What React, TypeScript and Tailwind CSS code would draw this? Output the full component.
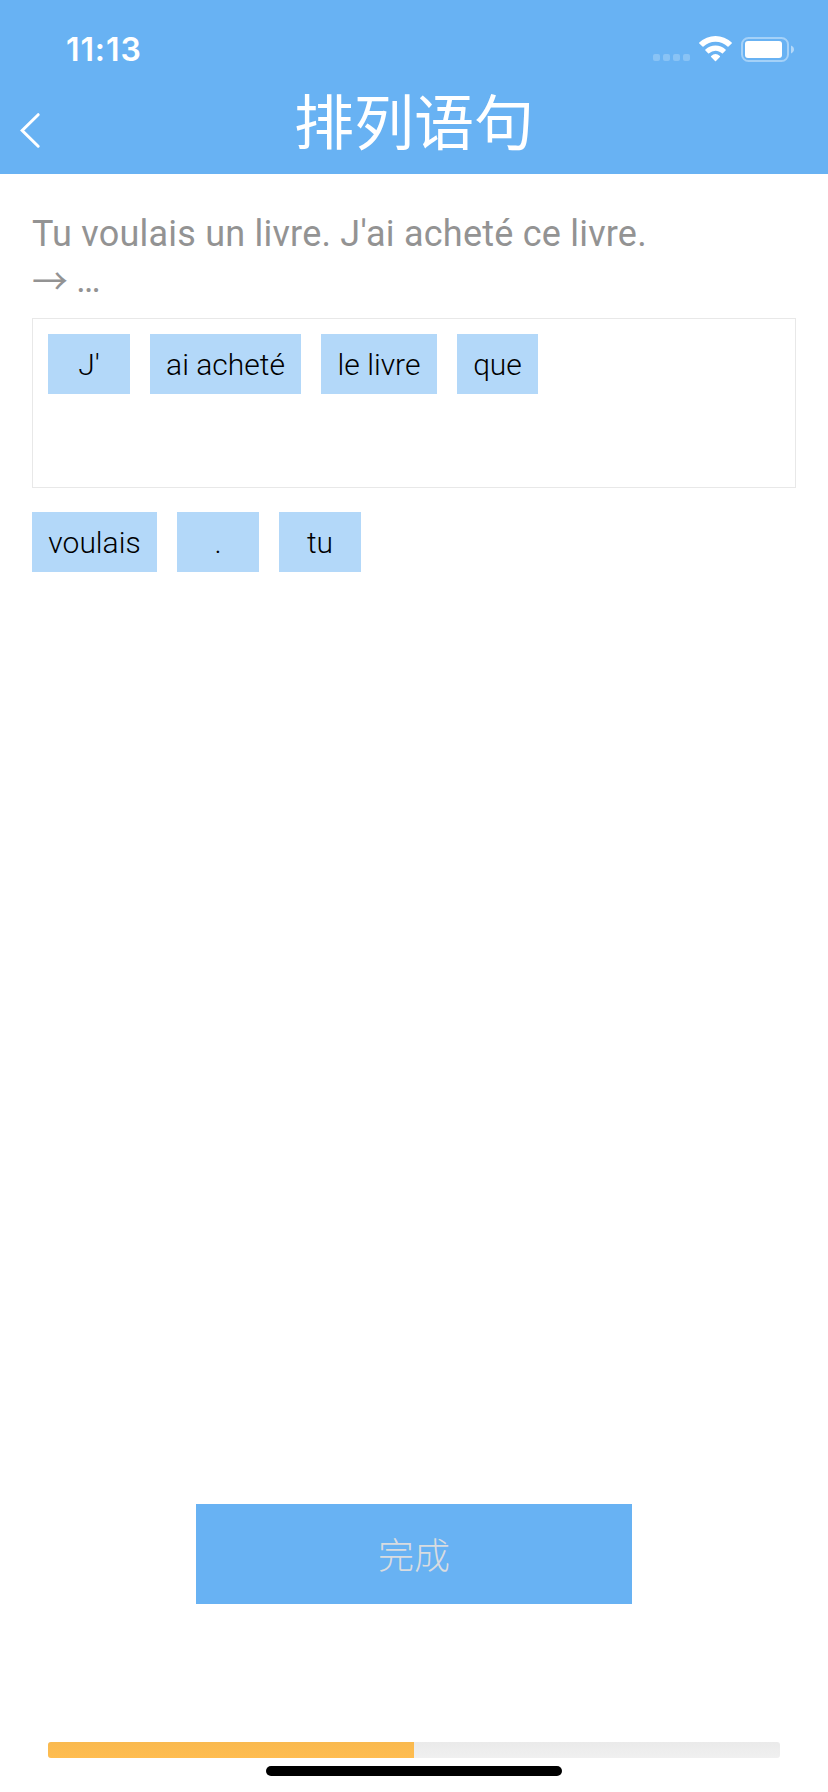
import React from "react";

const PLACED = [
  { text: "J'", width: "w-[82px]" },
  { text: "ai acheté", width: "w-[151px]" },
  { text: "le livre", width: "w-[116px]" },
  { text: "que", width: "w-[81px]" },
];

const REMAINING = [
  { text: "voulais", width: "w-[125px]" },
  { text: ".", width: "w-[82px]" },
  { text: "tu", width: "w-[82px]" },
];

function Chip({ text, width }: { text: string; width: string }) {
  return (
    <button
      className={`${width} h-[60px] shrink-0 whitespace-nowrap bg-[#b3d8f9] text-center font-['Roboto',sans-serif] text-[30px] font-light leading-[62px] text-black`}
    >
      {text}
    </button>
  );
}

function StatusBar() {
  return (
    <div className="flex h-[88px] items-start justify-between pl-[66px] pr-[34px] pt-[30px] text-white">
      <span className="font-['Inter',sans-serif] text-[32px] font-semibold leading-10 tracking-[0.9px]">11:13</span>
      <svg className="mt-1" width="144" height="32" viewBox="650 34 144 32" fill="#fff">
        <g opacity="0.22">
          <rect x="653" y="54" width="7" height="7" rx="2" />
          <rect x="663" y="54" width="7" height="7" rx="2" />
          <rect x="673" y="54" width="7" height="7" rx="2" />
          <rect x="683" y="54" width="7" height="7" rx="2" />
        </g>
        <path d="M715.5 41.8c4.6 0 8.8 1.7 12 4.8.3.3.7.3 1 0l3.2-3.1c.3-.3.3-.7 0-1a23.4 23.4 0 0 0-32.4 0c-.3.3-.3.7 0 1l3.2 3.1c.3.3.7.3 1 0a17.3 17.3 0 0 1 12-4.8z" />
        <path d="M715.5 50.7c2.4 0 4.6.9 6.4 2.5.3.3.7.3 1 0l2.7-2.7c.4-.3.4-.7 0-1a14.7 14.7 0 0 0-20.2 0c-.4.3-.4.7 0 1l2.7 2.7c.3.3.7.3 1 0a9.5 9.5 0 0 1 6.4-2.5z" />
        <path d="M719.9 56.9c.3-.3.3-.7 0-1a6.9 6.9 0 0 0-8.8 0c-.3.3-.3.7 0 1l3.9 4c.3.3.7.3 1 0z" />
        <rect x="742" y="38" width="46" height="23" rx="6.5" fill="none" stroke="#fff" strokeWidth="2" opacity="0.4" />
        <rect x="745" y="41" width="37" height="17" rx="3" />
        <path d="M791 45.5c1.8.7 3 2.3 3 4s-1.2 3.3-3 4z" opacity="0.5" />
      </svg>
    </div>
  );
}

export default function App() {
  return (
    <div className="flex h-[1792px] w-[828px] flex-col bg-white">
      <header className="h-[174px] bg-[#68b2f3]">
        <StatusBar />
        <div className="grid h-[86px] grid-cols-[72px_1fr_72px]">
          <button aria-label="返回" className="flex items-start pl-[18px] pt-6">
            <svg width="24" height="38" viewBox="0 0 24 38" fill="none" stroke="#fff" strokeWidth="3" strokeLinecap="round">
              <path d="M20.2 2.7L4.2 18.5L20.2 34.2" />
            </svg>
          </button>
          <h1 className="h-[68px] text-center font-['Noto_Sans_CJK_SC',sans-serif] text-[60px] font-normal leading-[62px] text-white">
            排列语句
          </h1>
        </div>
      </header>

      <main className="flex flex-1 flex-col px-8 pt-9">
        <div className="h-[108px] whitespace-nowrap font-['Roboto',sans-serif] text-[36px] tracking-[0.22px] text-[#939393]">
          <p className="leading-[48px]">Tu voulais un livre. J'ai acheté ce livre.</p>
          <p className="flex h-12 gap-2">
            <span className="font-['Noto_Sans_CJK_SC',sans-serif] font-normal leading-[43px]">→</span>
            <span className="leading-[44px] tracking-[-1.8px]">...</span>
          </p>
        </div>

        <section className="flex h-[170px] items-start gap-5 border border-[#e8e8e8] p-[15px]">
          {PLACED.map((chip) => (
            <Chip key={chip.text} {...chip} />
          ))}
        </section>
        <section className="mt-6 flex gap-5">
          {REMAINING.map((chip) => (
            <Chip key={chip.text} {...chip} />
          ))}
        </section>

        <button className="mb-[138px] mt-auto h-[100px] w-[436px] self-center bg-[#68b2f3] font-['Noto_Sans_CJK_SC',sans-serif] text-[36px] font-light leading-[98px] text-[#d9dce0]">
          <span className="block h-[100px]">完成</span>
        </button>
        <div className="mx-4 h-4 shrink-0 overflow-hidden rounded-[3px] bg-linear-to-b from-[#eaeaea] to-[#f0f0f0]">
          <div className="h-4 w-1/2 bg-linear-to-b from-[#f9b94f] to-[#ffbd50]" />
        </div>
        <div className="mb-4 mt-2 h-[10px] w-[296px] shrink-0 self-center rounded-full bg-black" />
      </main>
    </div>
  );
}
